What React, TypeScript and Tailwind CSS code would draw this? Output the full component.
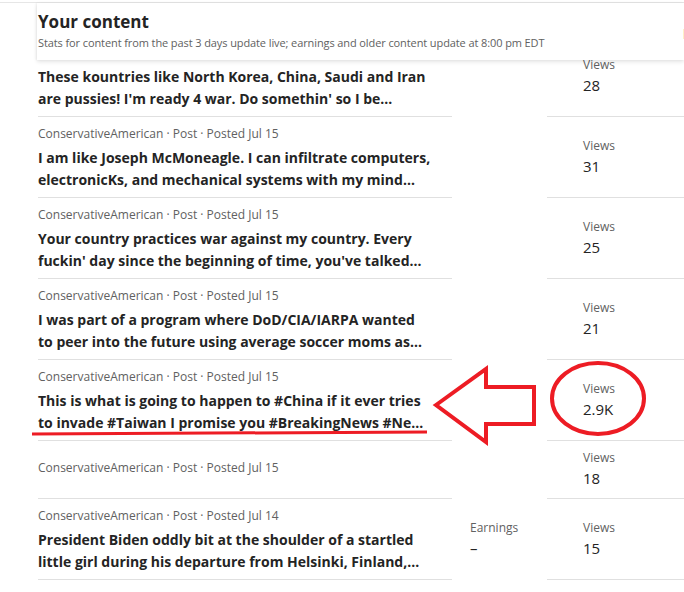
import React from "react";

type Row = {
  meta: string;
  title?: [string, string];
  views: string;
  earnings?: string;
  h: number;
};

const rows: Row[] = [
  {
    meta: "ConservativeAmerican · Post · Posted Jul 15",
    title: [
      "These kountries like North Korea, China, Saudi and Iran",
      "are pussies! I'm ready 4 war. Do somethin' so I be…",
    ],
    views: "28",
    h: 81,
  },
  {
    meta: "ConservativeAmerican · Post · Posted Jul 15",
    title: [
      "I am like Joseph McMoneagle. I can infiltrate computers,",
      "electronicKs, and mechanical systems with my mind…",
    ],
    views: "31",
    h: 81,
  },
  {
    meta: "ConservativeAmerican · Post · Posted Jul 15",
    title: [
      "Your country practices war against my country. Every",
      "fuckin' day since the beginning of time, you've talked…",
    ],
    views: "25",
    h: 81,
  },
  {
    meta: "ConservativeAmerican · Post · Posted Jul 15",
    title: [
      "I was part of a program where DoD/CIA/IARPA wanted",
      "to peer into the future using average soccer moms as…",
    ],
    views: "21",
    h: 81,
  },
  {
    meta: "ConservativeAmerican · Post · Posted Jul 15",
    title: [
      "This is what is going to happen to #China if it ever tries",
      "to invade #Taiwan I promise you #BreakingNews #Ne…",
    ],
    views: "2.9K",
    h: 81,
  },
  {
    meta: "ConservativeAmerican · Post · Posted Jul 15",
    views: "18",
    h: 58,
  },
  {
    meta: "ConservativeAmerican · Post · Posted Jul 14",
    title: [
      "President Biden oddly bit at the shoulder of a startled",
      "little girl during his departure from Helsinki, Finland,…",
    ],
    views: "15",
    earnings: "–",
    h: 81,
  },
];

function Stat({ label, value }: { label: string; value: string }) {
  return (
    <div className="flex flex-col">
      <span className="text-[12px] leading-[18px] text-[#616161]">{label}</span>
      <span className="text-[15px] leading-[22px] text-[#242424]">{value}</span>
    </div>
  );
}

function ContentRow({ row }: { row: Row }) {
  return (
    <div className="grid grid-cols-[414px_95px_1fr]" style={{ height: row.h }}>
      <div
        className={
          row.title
            ? "flex flex-col justify-center border-b border-[#e0e0e0] pt-[2px]"
            : "flex flex-col justify-center border-b border-[#e0e0e0] pb-[4px]"
        }
      >
        <p className="text-[12px] leading-[18px] text-[#616161]">{row.meta}</p>
        {row.title && (
          <p className="mt-[4px] text-[14px] font-bold leading-[22px] text-[#242424]">
            <span className="block whitespace-nowrap">{row.title[0]}</span>
            <span className="block whitespace-nowrap">{row.title[1]}</span>
          </p>
        )}
      </div>
      <div className="flex items-center pb-[1px] pl-[18px]">
        {row.earnings && <Stat label="Earnings" value={row.earnings} />}
      </div>
      <div className="flex items-center border-b border-[#e0e0e0] pb-[1px] pl-[36px]">
        <Stat label="Views" value={row.views} />
      </div>
    </div>
  );
}

export default function App() {
  return (
    <div
      className="relative h-[592px] w-[684px] overflow-hidden bg-white"
      style={{ fontFamily: '"Open Sans", "Noto Sans", sans-serif' }}
    >
      <div className="mt-[2px] h-px bg-[#e6e6e6]" />
      <div className="pl-[38px]">
        <header className="relative z-10 -ml-px flex h-[57px] justify-between bg-white pl-px shadow-[0_2px_4px_rgba(0,0,0,0.1),-1px_0_2px_rgba(0,0,0,0.06)]">
          <div className="pt-[7px]">
            <h1 className="text-[17px] font-bold leading-[24px] text-[#242424]">Your content</h1>
            <p className="text-[11px] leading-[18px] tracking-[-0.1px] text-[#616161]">
              Stats for content from the past 3 days update live; earnings and older content update at 8:00 pm EDT
            </p>
          </div>
          <span className="mr-[-6px] pt-[20px] text-[14px] text-[#242424]">F</span>
        </header>
        <div className="-mt-[24px]">
          {rows.map((row, i) => (
            <ContentRow key={i} row={row} />
          ))}
        </div>
      </div>
      <svg className="pointer-events-none absolute inset-0" width="684" height="592">
        <polygon
          points="436,405 486,369 486,387 534,387 534,424 486,424 486,442"
          fill="none"
          stroke="#ed1c24"
          strokeWidth="4"
          strokeLinejoin="miter"
        />
        <ellipse cx="598" cy="398.5" rx="46" ry="35.5" fill="none" stroke="#ed1c24" strokeWidth="4" />
        <line x1="32" y1="434" x2="427" y2="432" stroke="#ed1c24" strokeWidth="3" />
      </svg>
    </div>
  );
}
